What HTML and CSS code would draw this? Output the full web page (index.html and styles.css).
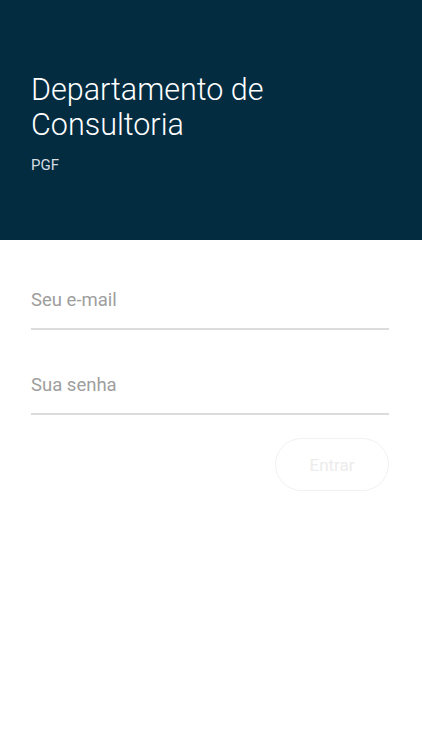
FILE: index.html
```html
<!DOCTYPE html>
<html>
<head>
    <link rel="stylesheet" href="styles.css">
</head>
<body>
    <div class="header">
        <h1 class="title">Departamento de Consultoria</h1>
        <div class="subtitle">PGF</div>
    </div>
    <form class="login">
        <input class="field" type="email" placeholder="Seu e-mail">
        <input class="field" type="password" placeholder="Sua senha">
        <div class="actions">
            <button class="submit_btn" type="button" disabled>Entrar</button>
        </div>
    </form>
</body>
</html>
```

FILE: styles.css
```css
body {
    margin: 0;
    padding: 0;
    font-family: Roboto, "Noto Sans", sans-serif;
    background-color: #ffffff;
}
.header {
    background-color: #032c41;
    height: 240px;
    box-sizing: border-box;
    padding: 72px 31px 0 31px;
    color: #ffffff;
}
.title {
    margin: 0;
    font-weight: 300;
    font-size: 30.5px;
    line-height: 35px;
}
.subtitle {
    margin-top: 14px;
    font-size: 15px;
    color: #d5dde2;
}
.login {
    padding: 42px 33px 0 31px;
    display: flex;
    flex-direction: column;
}
.field {
    box-sizing: border-box;
    border: none;
    border-bottom: 2px solid #dcdcdc;
    outline: none;
    font-family: Roboto, "Noto Sans", sans-serif;
    font-size: 18.5px;
    padding: 0 0 10px 0;
    height: 48px;
    margin-bottom: 37px;
    background: transparent;
    color: #333;
}
.field::placeholder {
    color: #9e9e9e;
}
.actions {
    display: flex;
    justify-content: flex-end;
    margin-top: -14px;
}
.submit_btn {
    width: 114px;
    height: 53px;
    border: 1px solid #f1f1f1;
    border-radius: 27px;
    background-color: #ffffff;
    color: #ececec;
    font-family: Roboto, "Noto Sans", sans-serif;
    font-size: 17px;
}
```
